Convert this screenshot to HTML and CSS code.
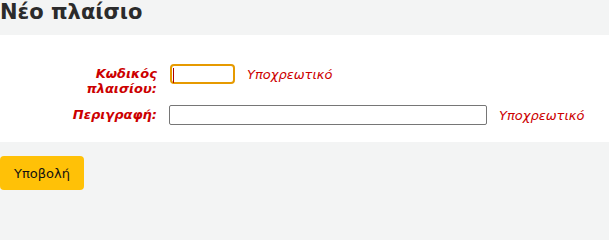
FILE: index.html
```html
<!DOCTYPE html>
<html lang="el">
<head>
<meta charset="utf-8">
<title>Νέο πλαίσιο</title>
<link rel="stylesheet" href="styles.css">
</head>
<body>
<h1 class="title">Νέο πλαίσιο</h1>
<form class="panel">
  <ol class="rows">
    <li class="row">
      <label class="lbl" for="code">Κωδικός πλαισίου:</label>
      <span class="field">
        <input class="inp inp-short focus" id="code" type="text">
        <span class="caret"></span>
      </span>
      <span class="req">Υποχρεωτικό</span>
    </li>
    <li class="row">
      <label class="lbl" for="desc">Περιγραφή:</label>
      <input class="inp inp-long" id="desc" type="text">
      <span class="req">Υποχρεωτικό</span>
    </li>
  </ol>
</form>
<div class="actions">
  <button class="btn" type="button">Υποβολή</button>
</div>
</body>
</html>
```
FILE: styles.css
```css
html, body {
  margin: 0;
  padding: 0;
  background: #f3f4f4;
  font-family: "DejaVu Sans", sans-serif;
}
.title {
  margin: 0;
  padding: 0;
  height: 35px;
  font-size: 21px;
  font-weight: bold;
  line-height: 24px;
  color: #2b2b2b;
}
.panel {
  background: #fff;
  padding: 29px 0 17px;
}
.rows {
  list-style: none;
  margin: 0;
  padding: 0;
  display: flex;
  flex-direction: column;
  gap: 9px;
}
.row {
  display: grid;
  grid-template-columns: 117px auto auto;
  justify-content: start;
  align-items: start;
  column-gap: 12px;
  padding-left: 40px;
}
.lbl {
  text-align: right;
  font-size: 13px;
  line-height: 15px;
  font-weight: bold;
  font-style: italic;
  color: #cc0000;
  padding-top: 2px;
}
.field {
  position: relative;
  display: block;
  height: 20px;
}
.inp {
  box-sizing: border-box;
  height: 20px;
  margin: 0;
  border: 1px solid #767676;
  border-radius: 2px;
  font-size: 13px;
  padding: 1px 2px;
  background: #fff;
  display: block;
}
.inp-short { width: 65px; margin-left: 1px; }
.inp-long { width: 318px; }
.focus {
  border: 2px solid #e69a00;
  border-radius: 4px;
  outline: none;
}
.caret {
  position: absolute;
  left: 4px;
  top: 4px;
  width: 1px;
  height: 15px;
  background: #b00000;
}
.req {
  font-size: 13px;
  font-style: italic;
  color: #cc0000;
  line-height: 15px;
  padding-top: 3px;
}
.actions {
  padding-top: 14px;
}
.btn {
  background: #ffc107;
  border: none;
  border-radius: 4px;
  width: 84px;
  height: 34px;
  font-family: "DejaVu Sans", sans-serif;
  font-size: 13px;
  color: #111;
  padding: 0;
}
```
